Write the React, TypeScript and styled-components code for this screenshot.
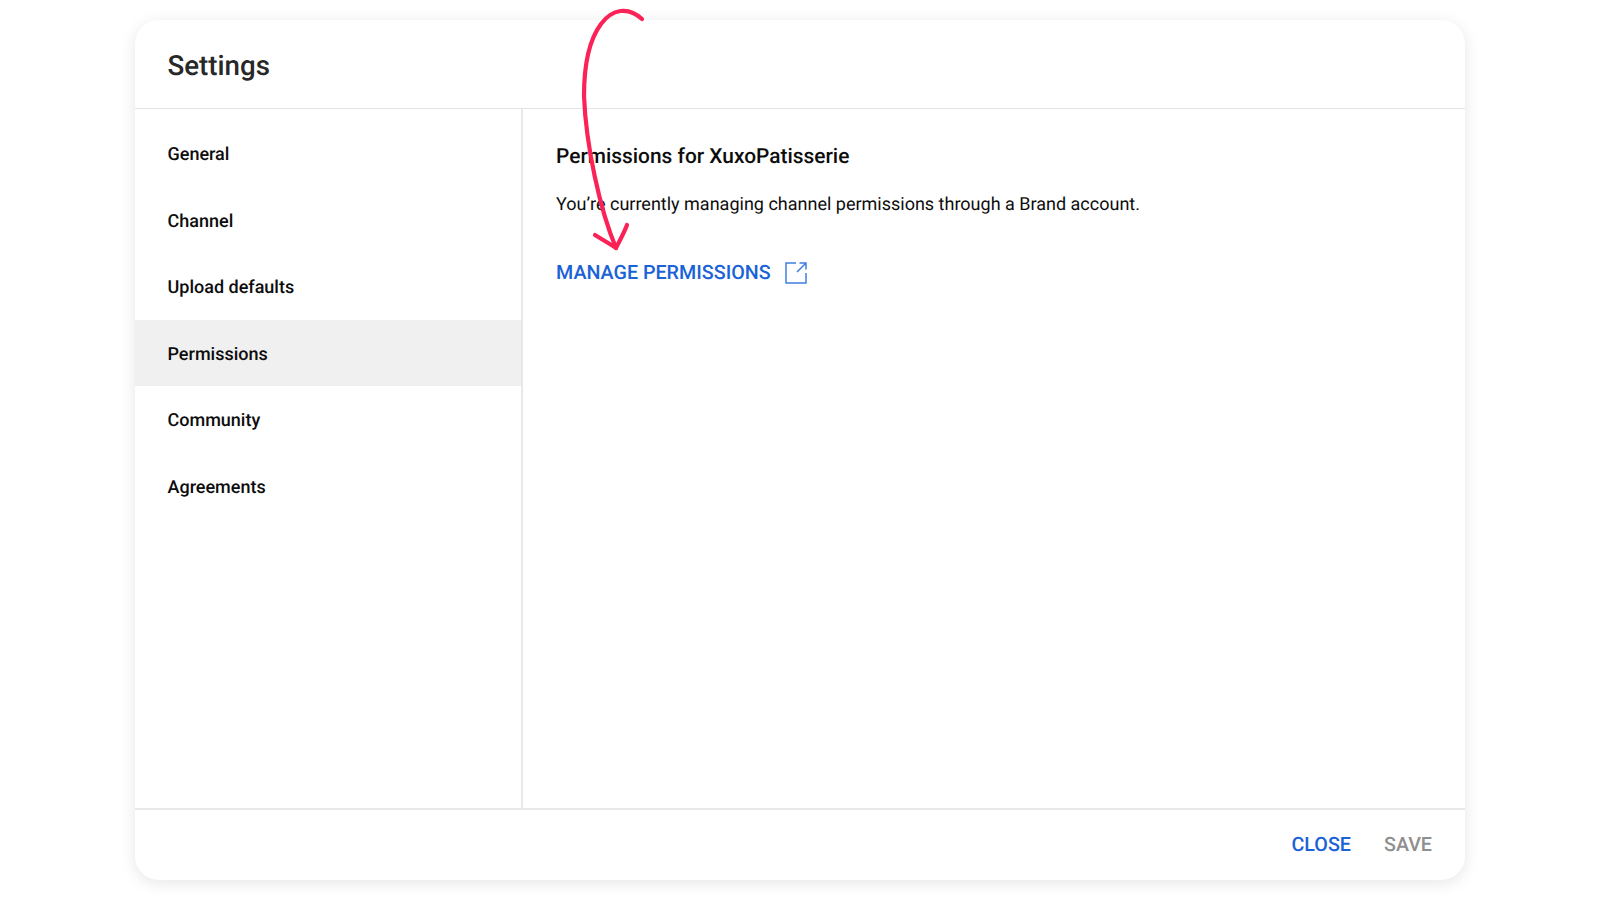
import styled, { createGlobalStyle } from "styled-components";

const GlobalStyle = createGlobalStyle`
  html, body {
    margin: 0;
    height: 100%;
    background: #ffffff;
    font-family: Roboto, "Liberation Sans", sans-serif;
    text-rendering: geometricPrecision;
  }
`;

const Page = styled.div`
  width: 1600px;
  height: 900px;
  box-sizing: border-box;
  padding: 20px 135px;
  position: relative;
  overflow: hidden;
`;

const Dialog = styled.div`
  height: 860px;
  display: flex;
  flex-direction: column;
  background: #fff;
  border-radius: 24px;
  box-shadow: 0 3px 16px rgba(0, 0, 0, 0.1);
`;

const Header = styled.header`
  height: 89px;
  flex: none;
  box-sizing: border-box;
  padding: 3px 0 0 32.5px;
  display: flex;
  align-items: center;
  border-bottom: 1px solid #e4e4e4;
`;

const Title = styled.h1`
  margin: 0;
  font-size: 27.7px;
  font-weight: 500;
  color: #282828;
`;

const Body = styled.div`
  flex: 1;
  display: flex;
  min-height: 0;
`;

const Sidebar = styled.nav`
  width: 388px;
  flex: none;
  box-sizing: border-box;
  padding-top: 11px;
  border-right: 2px solid #e8e8e8;
`;

const NavItem = styled.div<{ $active?: boolean }>`
  height: 66.5px;
  box-sizing: border-box;
  display: flex;
  align-items: center;
  padding: 2.5px 0 0 32.5px;
  font-size: 18px;
  font-weight: 500;
  color: #0d0d0d;
  background: ${(p) => (p.$active ? "#f0f0f0" : "transparent")};
`;

const Content = styled.main`
  flex: 1;
  padding: 36px 33px;
`;

const Heading = styled.h2`
  margin: 0;
  font-size: 20.9px;
  line-height: 24px;
  font-weight: 500;
  color: #0d0d0d;
`;

const Text = styled.p`
  margin: 24px 0 0;
  font-size: 18px;
  line-height: 24px;
  color: #0d0d0d;
`;

const LinkRow = styled.a`
  margin-top: 44px;
  display: flex;
  align-items: center;
  gap: 14px;
  font-size: 19.7px;
  line-height: 24px;
  font-weight: 500;
  color: #1a62d6;
`;

const Footer = styled.footer`
  height: 72px;
  flex: none;
  box-sizing: border-box;
  display: flex;
  align-items: center;
  justify-content: flex-end;
  gap: 33px;
  padding: 0 33px 1px 0;
  border-top: 2px solid #e8e8e8;
`;

const Action = styled.span<{ $muted?: boolean }>`
  font-size: 19.7px;
  font-weight: 500;
  color: ${(p) => (p.$muted ? "#8f8f8f" : "#1a62d6")};
`;

const Arrow = styled.svg`
  position: absolute;
  left: 0;
  top: 0;
  pointer-events: none;
`;

const App = () => {
  return (
    <Page>
      <GlobalStyle />
      <Dialog>
        <Header>
          <Title>Settings</Title>
        </Header>
        <Body>
          <Sidebar>
            <NavItem>General</NavItem>
            <NavItem>Channel</NavItem>
            <NavItem>Upload defaults</NavItem>
            <NavItem $active>Permissions</NavItem>
            <NavItem>Community</NavItem>
            <NavItem>Agreements</NavItem>
          </Sidebar>
          <Content>
            <Heading>Permissions for XuxoPatisserie</Heading>
            <Text>You’re currently managing channel permissions through a Brand account.</Text>
            <LinkRow>
              MANAGE PERMISSIONS
              <svg width="22" height="22" viewBox="0 0 22 22" fill="none" stroke="#3f7fe0" strokeWidth="1.5">
                <path d="M11 1H1v20h20V11" />
                <path d="M12 10l8.5-8.5M14.5 1h6.5v6.5" />
              </svg>
            </LinkRow>
          </Content>
        </Body>
        <Footer>
          <Action>CLOSE</Action>
          <Action $muted>SAVE</Action>
        </Footer>
      </Dialog>
      <Arrow width="1600" height="900" viewBox="0 0 1600 900" fill="none" stroke="#fb2257" strokeWidth="4.2" strokeLinecap="round" strokeLinejoin="round">
        <path d="M642 19C628 6 612 9 601 24C586 44 584 74 584 96C586 146 600 210 616 248" />
        <path d="M595 235C603 240 610 244 616 248C620 240 624 233 627 225" />
      </Arrow>
    </Page>
  );
};

export default App;
